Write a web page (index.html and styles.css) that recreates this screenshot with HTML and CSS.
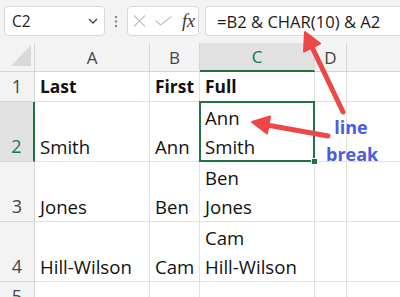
FILE: index.html
```html
<!DOCTYPE html>
<html lang="en">
<head>
    <meta charset="UTF-8">
    <meta name="viewport" content="width=device-width, initial-scale=1.0">
    <title>Line break with CHAR(10)</title>
    <link rel="stylesheet" href="styles.css">
</head>
<body>
    <div class="app">
        <div class="toolbar">
            <div class="namebox">
                <span>C2</span>
                <svg width="10" height="6" viewBox="0 0 10 6"><path d="M1 1 L5 5 L9 1" fill="none" stroke="#444" stroke-width="1.3"/></svg>
            </div>
            <div class="grip">
                <svg width="4" height="13" viewBox="0 0 4 13"><circle cx="2" cy="2" r="1.2" fill="#8a8a8a"/><circle cx="2" cy="6.5" r="1.2" fill="#8a8a8a"/><circle cx="2" cy="11" r="1.2" fill="#8a8a8a"/></svg>
            </div>
            <div class="fxbox">
                <svg class="cancel" width="13" height="12" viewBox="0 0 13 12"><path d="M1 0.5 L12 11.5 M12 0.5 L1 11.5" stroke="#c2c2c2" stroke-width="1.2" fill="none"/></svg>
                <svg class="enter" width="17" height="10" viewBox="0 0 17 10"><path d="M0.5 4.5 L5.5 9 L16.5 0.5" stroke="#c2c2c2" stroke-width="1.2" fill="none"/></svg>
                <span class="fx">fx</span>
            </div>
            <div class="formula">=B2 &amp; CHAR(10) &amp; A2</div>
        </div>

        <div class="sheet">
            <div class="cell corner"><span class="tri"></span></div>
            <div class="cell head">A</div>
            <div class="cell head">B</div>
            <div class="cell head active-col">C</div>
            <div class="cell head">D</div>
            <div class="cell head">E</div>

            <div class="cell rowhead">1</div>
            <div class="cell bold">Last</div>
            <div class="cell bold">First</div>
            <div class="cell bold">Full</div>
            <div class="cell"></div>
            <div class="cell"></div>

            <div class="cell rowhead active-row">2</div>
            <div class="cell">Smith</div>
            <div class="cell">Ann</div>
            <div class="cell selected">Ann<br>Smith<span class="handle"></span></div>
            <div class="cell"></div>
            <div class="cell"></div>

            <div class="cell rowhead">3</div>
            <div class="cell">Jones</div>
            <div class="cell">Ben</div>
            <div class="cell">Ben<br>Jones</div>
            <div class="cell"></div>
            <div class="cell"></div>

            <div class="cell rowhead">4</div>
            <div class="cell">Hill-Wilson</div>
            <div class="cell">Cam</div>
            <div class="cell">Cam<br>Hill-Wilson</div>
            <div class="cell"></div>
            <div class="cell"></div>

            <div class="cell rowhead">5</div>
            <div class="cell"></div>
            <div class="cell"></div>
            <div class="cell"></div>
            <div class="cell"></div>
            <div class="cell"></div>
        </div>

        <div class="note">line<br>break</div>

        <svg class="arrows" width="400" height="297" viewBox="0 0 400 297">
            <g fill="#ef4646" stroke="#ef4646" stroke-linecap="round" stroke-linejoin="round">
                <line x1="343" y1="112" x2="312" y2="47" stroke-width="5"/>
                <polygon points="305,32 320,43.5 304,51.5" stroke-width="2"/>
                <line x1="328" y1="136" x2="267" y2="125" stroke-width="5"/>
                <polygon points="252,122 270,116.5 267,133.5" stroke-width="2"/>
            </g>
        </svg>
    </div>
</body>
</html>
```

FILE: styles.css
```css
body {
    margin: 0;
    font-family: 'Open Sans', 'Noto Sans', sans-serif;
    background-color: #ffffff;
    overflow: hidden;
}
.app {
    position: relative;
    width: 400px;
    height: 297px;
    overflow: hidden;
}

/* formula bar */
.toolbar {
    display: flex;
    align-items: flex-start;
    height: 43px;
    padding: 6px 0 0 4px;
    box-sizing: border-box;
    background-color: #f3f3f3;
}
.namebox, .fxbox, .formula {
    height: 30px;
    box-sizing: border-box;
    border: 1px solid #d8d8d8;
    border-radius: 4px;
    background-color: #ffffff;
    display: flex;
    align-items: center;
    flex: none;
}
.namebox {
    width: 101px;
    justify-content: space-between;
    padding: 0 6px 0 7px;
    font-size: 15.5px;
    color: #222;
}
.grip {
    width: 22px;
    height: 30px;
    display: flex;
    align-items: center;
    justify-content: center;
    flex: none;
}
.fxbox {
    width: 72px;
    padding-left: 5px;
}
.fxbox .enter {
    margin-left: 9px;
}
.fx {
    margin-left: 10px;
    font-family: 'Liberation Serif', serif;
    font-style: italic;
    font-size: 18px;
    color: #333;
}
.formula {
    width: 240px;
    margin-left: 6px;
    padding-left: 11px;
    font-size: 16.6px;
    color: #1a1a1a;
    white-space: nowrap;
}

/* sheet grid */
.sheet {
    display: grid;
    grid-template-columns: 35px 115px 50px 115px 32px 115px;
    grid-template-rows: 29px 30px 60px 60px 60px 30px;
}
.cell {
    position: relative;
    display: flex;
    align-items: flex-end;
    padding: 0 4px 0 5px;
    box-sizing: border-box;
    border-right: 1px solid #e1e1e1;
    border-bottom: 1px solid #e1e1e1;
    font-size: 18.6px;
    line-height: 29px;
    color: #111;
    white-space: nowrap;
}
.cell.bold {
    font-weight: 700;
    font-size: 17.4px;
}
.head, .corner, .rowhead {
    background-color: #f3f3f3;
    border-color: #d6d6d6;
    color: #444;
}
.head {
    justify-content: center;
    align-items: center;
    padding: 0;
    font-size: 17px;
}
.corner {
    justify-content: flex-end;
    padding: 0 3px 5px 0;
}
.tri {
    width: 0;
    height: 0;
    border-left: 20px solid transparent;
    border-bottom: 21px solid #d9d9d9;
}
.rowhead {
    justify-content: center;
    padding: 0;
    font-size: 18px;
}
.active-col {
    background-color: #e1e1e1;
    color: #217346;
    border-bottom: 2px solid #217346;
}
.active-row {
    background-color: #e1e1e1;
    color: #217346;
    border-right: 2px solid #217346;
}
.selected::after {
    content: "";
    position: absolute;
    top: -1px;
    left: -1px;
    right: -1px;
    bottom: -1px;
    border: 2px solid #217346;
}
.handle {
    position: absolute;
    right: -4px;
    bottom: -4px;
    width: 5px;
    height: 5px;
    background-color: #217346;
    border: 1px solid #ffffff;
    z-index: 1;
}

/* annotation */
.note {
    position: absolute;
    left: 326px;
    top: 114px;
    width: 50px;
    text-align: center;
    font-size: 18px;
    font-weight: 700;
    line-height: 27px;
    color: #4a5be6;
}
.arrows {
    position: absolute;
    left: 0;
    top: 0;
    pointer-events: none;
}
```
